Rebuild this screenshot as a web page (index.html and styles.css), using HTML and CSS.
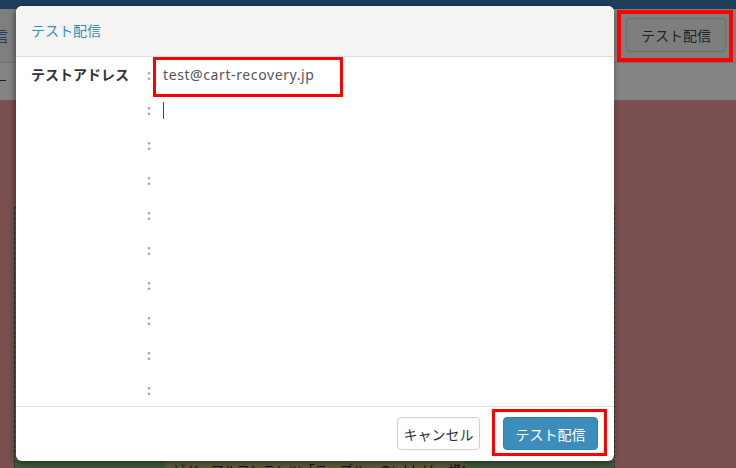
FILE: index.html
```html
<!DOCTYPE html>
<html lang="ja">

<head>
    <meta charset="UTF-8">
    <meta name="viewport" content="width=device-width, initial-scale=1.0">
    <title>テスト配信</title>
    <link rel="stylesheet" href="styles.css">
</head>

<body>
    <div class="topbar"></div>
    <div class="toolbar">
        <span class="crumb">信</span>
        <div class="mark_top">
            <button class="btn_bg">テスト配信</button>
        </div>
    </div>
    <div class="subbar">
        <div class="dash"></div>
    </div>
    <div class="content">
        <div class="panel">
            <div class="strip">
                <div class="olive">ビジュアルコンテンツ「テーブル」のtableは、構成要素として認</div>
            </div>
        </div>
    </div>

    <div class="modal">
        <div class="modal_header">テスト配信</div>
        <div class="modal_body">
            <div class="row">
                <span class="label">テストアドレス</span>
                <span class="colon">:</span>
                <span class="value address">test@cart-recovery.jp</span>
                <span class="mark_input"></span>
            </div>
            <div class="row">
                <span class="label"></span>
                <span class="colon">:</span>
                <span class="value"><span class="cursor"></span></span>
            </div>
            <div class="row"><span class="label"></span><span class="colon">:</span><span class="value"></span></div>
            <div class="row"><span class="label"></span><span class="colon">:</span><span class="value"></span></div>
            <div class="row"><span class="label"></span><span class="colon">:</span><span class="value"></span></div>
            <div class="row"><span class="label"></span><span class="colon">:</span><span class="value"></span></div>
            <div class="row"><span class="label"></span><span class="colon">:</span><span class="value"></span></div>
            <div class="row"><span class="label"></span><span class="colon">:</span><span class="value"></span></div>
            <div class="row"><span class="label"></span><span class="colon">:</span><span class="value"></span></div>
            <div class="row"><span class="label"></span><span class="colon">:</span><span class="value"></span></div>
        </div>
        <div class="modal_footer">
            <button class="btn btn_default">キャンセル</button>
            <div class="mark_btn">
                <button class="btn btn_primary">テスト配信</button>
            </div>
        </div>
    </div>
</body>

</html>
```

FILE: styles.css
```css
* {
    box-sizing: border-box;
}

html,
body {
    margin: 0;
    height: 468px;
    overflow: hidden;
}

body {
    font-family: 'Noto Sans', 'Noto Sans CJK JP', sans-serif;
    font-size: 14px;
    background: #7a4f4f;
}

/* page behind the dialog (already dimmed) */
.topbar {
    height: 9px;
    background: #1f3e5c;
}

.toolbar {
    height: 53px;
    background: #7f7f7f;
    display: flex;
    justify-content: space-between;
    align-items: flex-start;
    padding-top: 1px;
    padding-right: 3px;
}

.crumb {
    margin-top: 15px;
    margin-left: -7px;
    font-size: 15px;
    color: #23405c;
}

.mark_top {
    border: 4px solid #ff0000;
    padding: 4px 3px 6px 5px;
}

.btn_bg {
    height: 34px;
    width: 100px;
    padding: 0;
    font-family: inherit;
    font-size: 14px;
    white-space: nowrap;
    color: #222;
    background: #7e7e7e;
    border: 1px solid #6c6c6c;
    border-radius: 4px;
}

.subbar {
    height: 38px;
    background: #848484;
    border-top: 1px solid #6e6e6e;
    padding-top: 17px;
}

.dash {
    width: 6px;
    height: 1px;
    background: #1c1c1c;
}

.content {
    height: 368px;
    padding: 107px 121px 0 14px;
}

.panel {
    height: 100%;
    border: 1px dashed #1e3c3c;
    border-bottom: none;
    display: flex;
    flex-direction: column;
    justify-content: flex-end;
}

.strip {
    height: 7px;
    background: #3e5a3a;
    padding-left: 150px;
}

.olive {
    width: 300px;
    height: 7px;
    overflow: hidden;
    background: #5e5a3b;
    color: #111;
    font-size: 13px;
    line-height: 18px;
    white-space: nowrap;
    padding-left: 8px;
}

/* dialog */
.modal {
    position: absolute;
    left: 16px;
    top: 6px;
    width: 598px;
    height: 455px;
    background: #fff;
    border-radius: 6px;
    box-shadow: -1px 2px 6px rgba(0, 0, 0, 0.45);
    overflow: hidden;
}

.modal_header {
    height: 51px;
    line-height: 50px;
    padding: 0 15px;
    background: #f4f4f4;
    border-bottom: 1px solid #dedede;
    color: #3c8dbc;
}

.modal_body {
    height: 349px;
    padding-top: 1px;
    padding-left: 15px;
    overflow: hidden;
}

.row {
    position: relative;
    display: flex;
    align-items: center;
    height: 35px;
    padding-bottom: 3px;
}

.label {
    width: 116px;
    font-weight: bold;
    color: #333;
}

.colon {
    width: 16px;
    font-weight: bold;
    color: #a5a5a5;
}

.value {
    color: #555;
}

.address {
    letter-spacing: 0.6px;
}

.mark_input {
    position: absolute;
    left: 122px;
    top: -1px;
    width: 190px;
    height: 40px;
    border: 3px solid #ff0000;
}

.cursor {
    display: block;
    width: 1px;
    height: 17px;
    margin-top: 2px;
    background: #444;
}

.modal_footer {
    height: 55px;
    border-top: 1px solid #e2e2e2;
    display: flex;
    justify-content: flex-end;
    align-items: flex-start;
    gap: 12px;
    padding: 2px 7px 0 0;
}

.btn {
    height: 33px;
    padding: 0;
    font-family: inherit;
    font-size: 14px;
    white-space: nowrap;
    border-radius: 4px;
    border: 1px solid transparent;
}

.btn_default {
    margin-top: 8px;
    width: 83px;
    background: #fff;
    color: #333;
    border-color: #cfcfcf;
}

.mark_btn {
    border: 3px solid #ff0000;
    padding: 5px 6px 3px 8px;
}

.btn_primary {
    display: block;
    width: 95px;
    background: #3c8dbc;
    border-color: #367fa9;
    color: #fff;
}
```
